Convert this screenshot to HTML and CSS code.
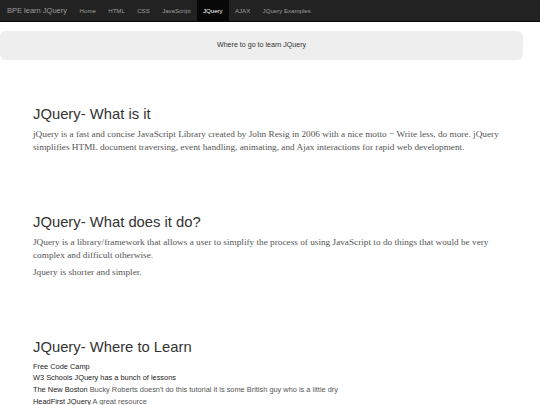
FILE: index.html
```html
<!DOCTYPE html>
<html>
<head>
<meta charset="utf-8">
<link rel="stylesheet" href="styles.css">
</head>
<body>
<nav class="navbar">
  <a class="brand" href="#">BPE learn JQuery</a>
  <ul class="nav">
    <li><a href="#">Home</a></li>
    <li><a href="#">HTML</a></li>
    <li><a href="#">CSS</a></li>
    <li><a href="#">JavaScript</a></li>
    <li class="active"><a href="#">JQuery</a></li>
    <li><a href="#">AJAX</a></li>
    <li><a href="#">JQuery Examples</a></li>
  </ul>
</nav>
<div class="jumbotron">Where to go to learn JQuery</div>
<main class="container">
  <section class="section">
    <h1 class="title">JQuery- What is it</h1>
    <p class="text">jQuery is a fast and concise JavaScript Library created by John Resig in 2006 with a nice motto &minus; Write less, do more. jQuery simplifies HTML document traversing, event handling, animating, and Ajax interactions for rapid web development.</p>
  </section>
  <section class="section">
    <h1 class="title">JQuery- What does it do?</h1>
    <p class="text">JQuery is a library/framework that allows a user to simplify the process of using JavaScript to do things that would be very complex and difficult otherwise.</p>
    <p class="text">Jquery is shorter and simpler.</p>
  </section>
  <section class="section">
    <h1 class="title">JQuery- Where to Learn</h1>
    <ul class="links">
      <li><a href="#">Free Code Camp</a></li>
      <li><a href="#">W3 Schools JQuery has a bunch of lessons</a></li>
      <li><a href="#">The New Boston</a> Bucky Roberts doesn't do this tutorial it is some British guy who is a little dry</li>
      <li><a href="#">HeadFirst JQuery</a> A great resource</li>
      <li><a href="#">Code Academy</a> Code school has a good JQuery tutorial for JS</li>
    </ul>
  </section>
</main>
</body>
</html>
```
FILE: styles.css
```css
html, body {
  margin: 0;
  padding: 0;
  background: #fff;
}
body {
  font-family: "Liberation Sans", Arial, sans-serif;
  color: #333;
}
a {
  text-decoration: none;
}
.navbar {
  display: flex;
  align-items: stretch;
  height: 20.5px;
  background: #222;
  border-bottom: 1px solid #080808;
}
.brand {
  display: flex;
  align-items: center;
  padding: 0 6.4px 0 7px;
  font-size: 7.5px;
  color: #9d9d9d;
}
.nav {
  display: flex;
  margin: 0;
  padding: 0;
  list-style: none;
}
.nav li {
  display: flex;
}
.nav a {
  display: flex;
  align-items: center;
  padding: 0 6.2px;
  font-size: 6.1px;
  color: #9d9d9d;
}
.nav .active a {
  background: #080808;
  color: #fff;
}
.jumbotron {
  width: 523px;
  height: 29px;
  margin-top: 9px;
  background: #eee;
  border-radius: 6px;
  display: flex;
  align-items: center;
  justify-content: center;
  font-size: 7.1px;
  color: #333;
}
.container {
  padding: 46px 33px 0 33px;
}
.section {
  margin-bottom: 60px;
}
.title {
  margin: 0 0 5.5px 0;
  font-size: 14.8px;
  line-height: 16.5px;
  font-weight: normal;
  color: #333;
}
.text {
  margin: 0 0 4px 0;
  font-family: "Liberation Serif", "Times New Roman", serif;
  font-size: 9.25px;
  line-height: 13px;
  color: #555;
}
.links {
  list-style: none;
  margin: 0;
  padding: 0;
  font-size: 7.4px;
  line-height: 11.75px;
  color: #555;
}
.links a {
  color: #222;
}
```
